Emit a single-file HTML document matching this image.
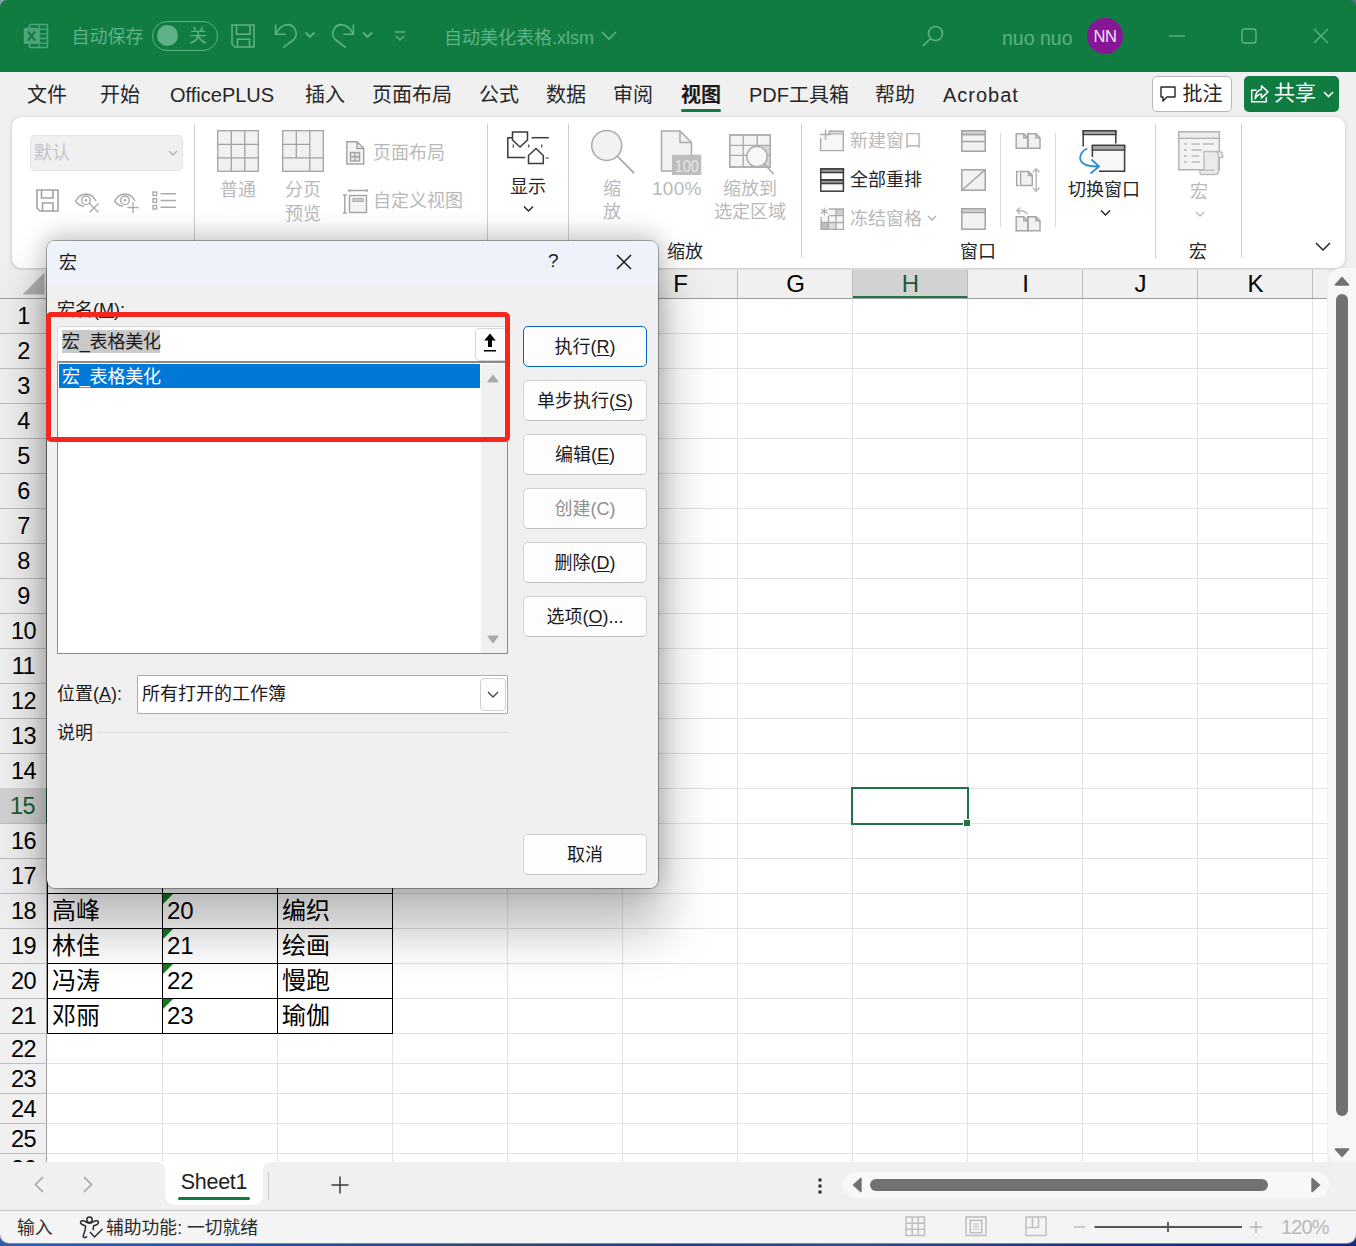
<!DOCTYPE html>
<html lang="zh-CN">
<head>
<meta charset="utf-8">
<title>自动美化表格.xlsm - Excel</title>
<style>
*{box-sizing:border-box;margin:0;padding:0}
html,body{width:1356px;height:1246px;overflow:hidden}
body{position:relative;background:#f0f0f0;font-family:"Liberation Sans","Noto Sans CJK SC",sans-serif;color:#222}
.abs{position:absolute}
svg{position:absolute;overflow:visible}
/* ---------- title bar ---------- */
#titlebar{left:0;top:0;width:1356px;height:72px;background:#107c41;color:#5fb287;border-radius:7px 7px 0 0}
#titlebar .t{position:absolute;white-space:nowrap;font-size:18px;line-height:24px;top:25.500px}
#toggle{left:152px;top:21px;width:66px;height:30px;border:1.5px solid #5fb287;border-radius:15px}
#toggle i{position:absolute;left:4px;top:2.500px;width:21px;height:21px;border-radius:50%;background:#5fb287}
#toggle b{position:absolute;left:36px;top:2px;font-weight:normal;font-size:18px;line-height:24px}
#avatar{left:1087px;top:18px;width:36px;height:36px;border-radius:50%;background:#881798;color:#f3e3f5;font-size:16.500px;line-height:36px;text-align:center;letter-spacing:-.3px}
/* ---------- tabs ---------- */
#tabs{left:0;top:72px;width:1356px;height:45px}
#tabs span{position:absolute;top:9px;font-size:20px;line-height:28px;white-space:nowrap;color:#262626}
#tabs .lat{letter-spacing:0}
#tabs .act{font-weight:bold;color:#1a1a1a}
#tabul{left:681px;top:109px;width:40px;height:3px;background:#107c41;border-radius:2px}
#btnc{left:1152px;top:76px;width:80px;height:36px;background:#fff;border:1px solid #b8b8b8;border-radius:5px}
#btns{left:1244px;top:76px;width:95px;height:36px;background:#107c41;border-radius:5px;color:#fff}
#btnc span,#btns span{position:absolute;font-size:20px;line-height:28px;top:3px}
</style>
</head>
<body>

<!-- ================= TITLE BAR ================= -->
<div class="abs" style="left:0;top:0;width:12px;height:12px;background:#8fa0b0"></div>
<div class="abs" style="left:1344px;top:0;width:12px;height:12px;background:#5d6f86"></div>
<div id="titlebar" class="abs">
  <svg style="left:22px;top:22px" width="30" height="28" viewBox="0 0 30 28">
    <rect x="7.500" y="2.500" width="18" height="23" rx="1.200" fill="none" stroke="#4ea57b" stroke-width="1.600"/>
    <path d="M7.500 7.300H25.500M7.500 11.900H25.500M7.500 16.500H25.500M7.500 21.100H25.500M17.200 2.500V25.500" stroke="#4ea57b" stroke-width="1.300" fill="none"/>
    <rect x="1.800" y="5.800" width="15.400" height="16.200" rx="1.500" fill="#4ea57b"/>
    <path d="M6 9.500L13 18.500M13 9.500L6 18.500" stroke="#107c41" stroke-width="2.200" fill="none"/>
  </svg>
  <span class="t" style="left:71.500px;top:24.500px;font-size:18px">自动保存</span>
  <div id="toggle" class="abs"><i></i><b>关</b></div>
  <svg style="left:231px;top:24px" width="24" height="24" viewBox="0 0 24 24" fill="none" stroke="#5fb287" stroke-width="1.500">
    <path d="M1 1H23V23H4L1 20Z"/><path d="M5.500 1V10.300H19V1"/><path d="M6.500 23V15.200H18.500V23"/>
  </svg>
  <svg style="left:273px;top:22px" width="44" height="28" viewBox="0 0 44 28" fill="none" stroke="#5fb287" stroke-width="1.600">
    <path d="M2.600 2.600V12.300H12.700"/><path d="M2.600 12.300C6 5.500 11 2.600 15 2.600C20 2.600 23.200 7 23.200 12C23.200 15 21.500 17 19.500 18.500L10.300 25.600"/><path d="M32.500 10.500L37 15L41.500 10.500" stroke-width="1.800"/>
  </svg>
  <svg style="left:330px;top:22px" width="44" height="28" viewBox="0 0 44 28" fill="none" stroke="#5fb287" stroke-width="1.600">
    <path d="M23.400 2.600V12.300H13.300"/><path d="M23.400 12.300C20 5.500 15 2.600 11 2.600C6 2.600 2.800 7 2.800 12C2.800 15 4.500 17 6.500 18.500L15.700 25.600"/><path d="M33 10.500L37.500 15L42 10.500" stroke-width="1.800"/>
  </svg>
  <svg style="left:393px;top:30px" width="14" height="12" viewBox="0 0 14 12" fill="none" stroke="#5fb287" stroke-width="1.5">
    <path d="M2 2H12"/><path d="M3 6L7 10L11 6"/>
  </svg>
  <span class="t" style="left:444px">自动美化表格.xlsm</span>
  <svg style="left:601px;top:31px" width="16" height="10" viewBox="0 0 16 10" fill="none" stroke="#5fb287" stroke-width="1.6"><path d="M1 1L8 8L15 1"/></svg>
  <svg style="left:921px;top:24px" width="24" height="24" viewBox="0 0 24 24" fill="none" stroke="#5fb287" stroke-width="1.6">
    <circle cx="14.5" cy="9.5" r="7"/><path d="M9.5 14.5L2 22"/>
  </svg>
  <span class="t" style="left:1002px;font-size:19.500px">nuo nuo</span>
  <div id="avatar" class="abs">NN</div>
  <svg style="left:1168px;top:27px" width="18" height="18" viewBox="0 0 18 18" fill="none" stroke="#5fb287" stroke-width="1.4"><path d="M1 9H17"/></svg>
  <svg style="left:1241px;top:28px" width="16" height="16" viewBox="0 0 16 16" fill="none" stroke="#5fb287" stroke-width="1.4"><rect x="1" y="1" width="14" height="14" rx="2.5"/></svg>
  <svg style="left:1313px;top:28px" width="16" height="16" viewBox="0 0 16 16" fill="none" stroke="#5fb287" stroke-width="1.4"><path d="M1 1L15 15M15 1L1 15"/></svg>
</div>

<!-- ================= RIBBON TABS ================= -->
<div id="tabs" class="abs">
  <span style="left:27px">文件</span>
  <span style="left:100px">开始</span>
  <span class="lat" style="left:170px">OfficePLUS</span>
  <span style="left:305px">插入</span>
  <span style="left:372px">页面布局</span>
  <span style="left:479px">公式</span>
  <span style="left:546px">数据</span>
  <span style="left:613px">审阅</span>
  <span class="act" style="left:681px">视图</span>
  <span style="left:749px">PDF工具箱</span>
  <span style="left:875px">帮助</span>
  <span class="lat" style="left:943px;letter-spacing:1px">Acrobat</span>
</div>
<div id="tabul" class="abs"></div>
<div id="btnc" class="abs">
  <svg style="left:5.500px;top:8px" width="18" height="18" viewBox="0 0 18 18" fill="none" stroke="#262626" stroke-width="1.4"><path d="M2 2H16V12H8L4 16V12H2Z" stroke-linejoin="round"/></svg>
  <span style="left:29.500px;color:#262626">批注</span>
</div>
<div id="btns" class="abs">
  <svg style="left:5.500px;top:8px" width="20" height="20" viewBox="0 0 20 20" fill="none" stroke="#fff" stroke-width="1.500"><path d="M6.500 6.300H1.700V17.800H16.300V13.200"/><path d="M5.200 14.800C5.500 9.500 8 6 11.500 5.600V1.800L18 7.900L11.500 14V10.200C8.500 10.200 6.500 11.800 5.200 14.800Z" stroke-linejoin="round"/></svg>
  <span style="left:30px;font-size:21px">共享</span>
  <svg style="left:79px;top:15px" width="11" height="8" viewBox="0 0 11 8" fill="none" stroke="#fff" stroke-width="1.6"><path d="M1 1L5.500 5.500L10 1"/></svg>
</div>

<!-- ================= RIBBON ================= -->
<style>
#ribbon{left:12px;top:117px;width:1333px;height:151px;background:#fff;border-radius:9px;box-shadow:0 1px 4px rgba(0,0,0,.18),0 0 1px rgba(0,0,0,.12)}
.rsep{position:absolute;top:124px;width:1px;height:134px;background:#cfcfcf}
.rsep2{position:absolute;top:133px;width:1px;height:94px;background:#dcdcdc}
.rl{position:absolute;font-size:18px;line-height:24px;white-space:nowrap;color:#b9b9b9;text-align:center}
.rl.dk{color:#262626}
#cmb{left:30px;top:135px;width:153px;height:36px;background:#f0f0f0;border:1px solid #e3e3e3;border-radius:5px}
</style>
<div id="ribbon" class="abs"></div>
<div id="cmb" class="abs"><span class="rl" style="left:3px;top:5px;color:#c4c4c4">默认</span>
  <svg style="left:137px;top:14px" width="10" height="7" viewBox="0 0 10 7" fill="none" stroke="#b0b0b0" stroke-width="1.4"><path d="M1 1L5 5L9 1"/></svg>
</div>
<!-- sheet-view small icons -->
<svg style="left:36px;top:189px" width="24" height="24" viewBox="0 0 24 24" fill="none" stroke="#a3a3a3" stroke-width="1.600">
  <path d="M1 1H22V22H4L1 19Z"/><path d="M5.500 1V9H17V1"/><path d="M6.500 22V14H17V22"/>
</svg>
<svg style="left:74px;top:191px" width="28" height="24" viewBox="0 0 28 24" fill="none" stroke="#ababab" stroke-width="1.4">
  <path d="M1.500 10C5 4 9 3 12 3C15.500 3 19.500 5 22 10"/><path d="M1.500 10C4 13.500 7 15 10 15.300"/><circle cx="12" cy="9.300" r="4.300"/><circle cx="12" cy="9.300" r="1.300" fill="#ababab" stroke="none"/><path d="M15.500 12.500L24.500 21.500M24.500 12.500L15.500 21.500"/>
</svg>
<svg style="left:113px;top:191px" width="28" height="24" viewBox="0 0 28 24" fill="none" stroke="#ababab" stroke-width="1.4">
  <path d="M1.500 10C5 4 9 3 12 3C15.500 3 19.500 5 22 10"/><path d="M1.500 10C4 13.500 7 15 10 15.300"/><circle cx="12" cy="9.300" r="4.300"/><circle cx="12" cy="9.300" r="1.300" fill="#ababab" stroke="none"/><path d="M20 11V22M14.500 16.500H25.500"/>
</svg>
<svg style="left:152px;top:191px" width="25" height="20" viewBox="0 0 25 20" fill="none" stroke="#ababab" stroke-width="1.4">
  <rect x="1" y="1" width="3.600" height="3.600"/><rect x="1" y="7.700" width="3.600" height="3.600"/><rect x="1" y="14.400" width="3.600" height="3.600"/><path d="M8.500 2.800H24M8.500 9.500H24M8.500 16.200H24"/>
</svg>
<div class="rsep" style="left:194px"></div>
<!-- normal / page break -->
<svg style="left:217px;top:130px" width="42" height="42" viewBox="0 0 42 42" fill="#f1f1f1" stroke="#a3a3a3" stroke-width="1.3">
  <rect x=".7" y=".7" width="40.600" height="40.600"/><path d="M14.300 .7V41.300M27.800 .7V41.300M.7 14.300H41.300M.7 27.800H41.300" fill="none"/>
</svg>
<span class="rl" style="left:220px;top:178px">普通</span>
<svg style="left:282px;top:130px" width="42" height="42" viewBox="0 0 42 42" fill="#f1f1f1" stroke="#a3a3a3" stroke-width="1.3">
  <rect x=".7" y=".7" width="40.600" height="40.600"/><path d="M27.800 .7V41.300M.7 27.800H41.300M14.300 .7V27.800M.7 14.300H27.800" fill="none"/>
</svg>
<span class="rl" style="left:285px;top:178px">分页<br>预览</span>
<svg style="left:346px;top:141px" width="19" height="24" viewBox="0 0 19 24" fill="none" stroke="#a3a3a3" stroke-width="1.4">
  <path d="M.8 .8H11L17.700 7.500V23H.8Z" fill="#f4f4f4"/><path d="M11 .8V7.500H17.700"/><rect x="4.500" y="11.500" width="9" height="8.500" fill="#e6e6e6"/><path d="M9 11.500V20M4.500 15.700H13.500"/>
</svg>
<span class="rl" style="left:373px;top:141px">页面布局</span>
<svg style="left:343px;top:189px" width="25" height="25" viewBox="0 0 25 25" fill="none" stroke="#a3a3a3" stroke-width="1.4">
  <path d="M6 1.500H24M6 0V3M24 0V3M1.800 6V24M0 6H3.600M0 24H3.600"/><rect x="6.500" y="6.500" width="17" height="17" fill="#f4f4f4"/><rect x="10" y="9.700" width="10" height="2.600" fill="#dcdcdc" stroke-width="1.100"/>
</svg>
<span class="rl" style="left:373px;top:189px">自定义视图</span>
<div class="rsep" style="left:487px"></div>
<!-- show -->
<svg style="left:507px;top:131px" width="42" height="34" viewBox="0 0 42 34" fill="none" stroke="#3b3b3b" stroke-width="1.500">
  <path d="M5.500 1H20.500V9L13 16L5.500 9Z"/><path d="M24.500 6.700H41.800"/><path d="M5 6.700H.8V26.600H18.300"/><path d="M21.500 32.500V24.500L29 17.500L36.300 24.500V32.500Z"/><path d="M6.300 13.500V16.500M21.800 13.500V16.500M34.800 13.500V16.500M38.500 27H41.800" stroke-width="1.200"/>
</svg>
<span class="rl dk" style="left:510px;top:175px">显示</span>
<svg style="left:523px;top:205px" width="11" height="8" viewBox="0 0 11 8" fill="none" stroke="#262626" stroke-width="1.500"><path d="M1 1.500L5.500 6L10 1.500"/></svg>
<div class="rsep" style="left:568px"></div>
<!-- zoom group -->
<svg style="left:591px;top:130px" width="44" height="44" viewBox="0 0 44 44" fill="none" stroke="#ababab" stroke-width="1.500">
  <circle cx="15.700" cy="15.400" r="15" fill="#f2f2f2"/><path d="M26.500 26.300L43 43" stroke-width="1.800"/>
</svg>
<span class="rl" style="left:603px;top:178px;line-height:23px">缩<br>放</span>
<svg style="left:660px;top:130px" width="42" height="46" viewBox="0 0 42 46" fill="none" stroke="#ababab" stroke-width="1.500">
  <path d="M1.500 1H20L31.500 12.500V41H1.500Z" fill="#f2f2f2"/><path d="M20 1V12.500H31.500"/><rect x="12" y="24.700" width="29.300" height="20.300" fill="#bdbdbd" stroke="none"/>
  <text x="26.700" y="41.500" font-family="Liberation Sans,sans-serif" font-size="17" fill="#e6e6e6" stroke="none" text-anchor="middle" textLength="24" lengthAdjust="spacingAndGlyphs">100</text>
</svg>
<span class="rl" style="left:652px;top:177px;font-size:19px;line-height:23px;letter-spacing:.3px">100%</span>
<svg style="left:729px;top:134px" width="46" height="42" viewBox="0 0 46 42" fill="none" stroke="#ababab" stroke-width="1.400">
  <rect x=".7" y="1" width="40.600" height="32" fill="#f4f4f4"/><rect x="28" y="11.400" width="13.300" height="21.600" fill="#d6d6d6" stroke="none"/><path d="M.7 11.400H41.300M.7 21.400H41.300M14.200 1V33M28.200 1V33"/><rect x=".7" y="1" width="40.600" height="32"/><circle cx="28" cy="22.500" r="10.200" fill="#f7f7f7"/><path d="M35.300 29.800L44.500 40" stroke-width="1.700"/>
</svg>
<span class="rl" style="left:714px;top:178px;line-height:23px;width:72px">缩放到<br>选定区域</span>
<span class="rl dk" style="left:667px;top:240px">缩放</span>
<div class="rsep" style="left:801px"></div>
<!-- window group col 1 -->
<svg style="left:819px;top:129px" width="25" height="23" viewBox="0 0 25 23" fill="none" stroke="#ababab" stroke-width="1.400">
  <path d="M10 2.300H24.300V21.600H1.600V9" fill="#f7f7f7"/><path d="M10 2.300H24.300V5H10Z" fill="#d9d9d9" stroke-width="1.100"/><path d="M6.500 .5V11M1 5.500H12" stroke-width="1.400"/>
</svg>
<span class="rl" style="left:850px;top:129px">新建窗口</span>
<svg style="left:820px;top:168px" width="24" height="24" viewBox="0 0 24 24" fill="none" stroke="#3b3b3b" stroke-width="1.500">
  <rect x=".8" y="1" width="22.600" height="22.200" fill="#fafafa"/><path d="M.8 1H23.400V4.500H.8ZM.8 12H23.400V15.500H.8Z" fill="#9c9c9c" stroke-width="1.300"/><path d="M.8 12H23.400"/>
</svg>
<span class="rl dk" style="left:850px;top:168px">全部重排</span>
<svg style="left:820px;top:207px" width="24" height="23" viewBox="0 0 24 23" fill="none" stroke="#ababab" stroke-width="1.300">
  <rect x="1" y="2" width="22.400" height="20.300" fill="#f6f6f6" stroke="none"/><rect x="16" y="2" width="7.400" height="6.700" fill="#cfcfcf" stroke="none"/><rect x="1" y="15.500" width="7.500" height="6.800" fill="#bdbdbd" stroke="none"/><rect x="8.500" y="15.500" width="7.500" height="6.800" fill="#dedede" stroke="none"/>
  <path d="M9 2H23.400V22.300H1V10M8.500 9V22.300M16 2V22.300M9 8.700H23.400M1 15.500H23.400"/><rect x="0" y="0" width="8.500" height="9" fill="#fff" stroke="none"/><path d="M4.300 .5V8.500M.8 2.500L7.800 6.500M7.800 2.500L.8 6.500" stroke-width="1.100"/>
</svg>
<span class="rl" style="left:850px;top:207px">冻结窗格</span>
<svg style="left:927px;top:215px" width="10" height="7" viewBox="0 0 10 7" fill="none" stroke="#b0b0b0" stroke-width="1.400"><path d="M1 1L5 5L9 1"/></svg>
<!-- window group col 2 -->
<svg style="left:961px;top:130px" width="25" height="22" viewBox="0 0 25 22" fill="#f2f2f2" stroke="#a3a3a3" stroke-width="1.500">
  <rect x=".8" y=".8" width="23.400" height="20.400"/><path d="M.8 4.500H24.200M.8 11.500H24.200" fill="none"/><rect x=".8" y=".8" width="23.400" height="3.700" fill="#d4d4d4"/>
</svg>
<svg style="left:961px;top:169px" width="25" height="22" viewBox="0 0 25 22" fill="#f2f2f2" stroke="#a3a3a3" stroke-width="1.500">
  <rect x=".8" y=".8" width="23.400" height="20.400"/><path d="M.8 21.200L24.200 .8" fill="none"/>
</svg>
<svg style="left:961px;top:208px" width="25" height="22" viewBox="0 0 25 22" fill="#f2f2f2" stroke="#a3a3a3" stroke-width="1.500">
  <rect x=".8" y=".8" width="23.400" height="20.400"/><rect x=".8" y=".8" width="23.400" height="3.700" fill="#d4d4d4"/>
</svg>
<div class="rsep2" style="left:1000px"></div>
<!-- window group col 3 -->
<svg style="left:1015px;top:133px" width="26" height="16" viewBox="0 0 26 16" fill="#f1f1f1" stroke="#a6a6a6" stroke-width="1.500">
  <path d="M1.200 .800H8.800L12.800 4.800V15.200H1.200Z"/><path d="M12.800 .800H21L25 4.800V15.200H12.800Z"/><path d="M8.800 .800V4.800H12.800M21 .800V4.800H25" fill="none"/><path d="M12.800 .800V15.200" fill="none"/>
</svg>
<svg style="left:1015px;top:167px" width="26" height="26" viewBox="0 0 26 26" fill="none" stroke="#a6a6a6" stroke-width="1.500">
  <path d="M4 4.600H1.700V18.600H4"/><path d="M5.600 4.600H13.500L17.300 8.400V18.600H5.600Z" fill="#f1f1f1"/><path d="M13.500 4.600V8.400H17.300"/><path d="M21.200 1.800V24.200M17.700 5.300L21.200 1.800L24.700 5.300M17.700 20.700L21.200 24.200L24.700 20.700" stroke="#b9b9b9"/>
</svg>
<svg style="left:1015px;top:205px" width="26" height="27" viewBox="0 0 26 27" fill="#f1f1f1" stroke="#a6a6a6" stroke-width="1.500">
  <path d="M1.200 11.800H8.800L12.800 15.800V25.700H1.200Z"/><path d="M12.800 11.800H21L25 15.800V25.700H12.800Z"/><path d="M8.800 11.800V15.800H12.800M21 11.800V15.800H25M12.800 11.800V25.700" fill="none"/><path d="M12.400 9.300C11.500 6.500 7 5.500 2.200 5.500M5.200 2.500L1.800 5.500L5.200 8.800" fill="none" stroke="#b9b9b9"/>
</svg>
<div class="rsep2" style="left:1055px"></div>
<!-- switch window -->
<svg style="left:1079px;top:130px" width="47" height="45" viewBox="0 0 47 45" fill="none" stroke="#3b3b3b" stroke-width="1.500">
  <path d="M4.200 16.500V.8H36.800V13.600"/><path d="M4.200 .8H36.800V4.700H4.200Z" fill="#a6a6a6" stroke-width="1.300"/>
  <path d="M13.400 27V15.400H45.600V41.300H20" fill="#f7f7f7"/><path d="M13.400 15.400H45.600V20.200H13.400Z" fill="#a6a6a6" stroke-width="1.300"/>
  <path d="M8.300 18.500C2 21 -1 28 3 32.500C6.500 36 12 36.500 19 36.500M12.500 29.500L20 36.500L11.500 43.500" stroke="#2e8fd0" stroke-width="1.800"/>
</svg>
<span class="rl dk" style="left:1068px;top:178px">切换窗口</span>
<svg style="left:1100px;top:209px" width="11" height="8" viewBox="0 0 11 8" fill="none" stroke="#262626" stroke-width="1.500"><path d="M1 1.500L5.500 6L10 1.500"/></svg>
<span class="rl dk" style="left:960px;top:240px">窗口</span>
<div class="rsep" style="left:1155px"></div>
<!-- macro -->
<svg style="left:1178px;top:131px" width="46" height="44" viewBox="0 0 46 44" fill="none" stroke="#b0b0b0" stroke-width="1.400">
  <path d="M.8 .8H41.300V38.700H.8Z" fill="#f3f3f3"/><path d="M.8 .8H41.300V7.400H.8Z" fill="#ededed" stroke-width="1.300"/>
  <path d="M6 13H9M13.500 13H22M25 13H36M6 19H9M13.500 19H24M6 25H9M13.500 25H21M6 31H9M13.500 31H22" stroke-width="1.500" stroke="#bcbcbc"/>
  <path d="M26 20.500H41.500Q44.700 20.800 44.700 24.500V26.500H40.500V40Q40.500 43.500 37 43.500H22.500Q21.500 41.500 22 39.300H26Z" fill="#ebebeb" stroke="#bdbdbd"/><path d="M40.500 26.500V24.500Q40.300 21 37.500 20.500" stroke="#bdbdbd"/><path d="M26 39.300H36.500" stroke="#bdbdbd"/>
</svg>
<span class="rl" style="left:1190px;top:180px">宏</span>
<svg style="left:1195px;top:211px" width="10" height="7" viewBox="0 0 10 7" fill="none" stroke="#b9b9b9" stroke-width="1.400"><path d="M1 1L5 5L9 1"/></svg>
<span class="rl dk" style="left:1189px;top:240px">宏</span>
<div class="rsep" style="left:1241px"></div>
<svg style="left:1315px;top:242px" width="16" height="10" viewBox="0 0 16 10" fill="none" stroke="#262626" stroke-width="1.500"><path d="M1 1L8 8L15 1"/></svg>

<!-- ================= GRID ================= -->
<style>
#grid{left:0;top:270px;width:1327px;height:892px;background:#fff;overflow:hidden}
#colhdr{left:0;top:0;width:1327px;height:28px;background:#f0f0f0}
#rowhdr{left:0;top:28px;width:47px;height:864px;background:#f0f0f0}
.ch{position:absolute;top:0;height:28px;width:115px;padding-left:1px;text-align:center;font-size:24px;line-height:28px;color:#000;border-right:1px solid #bdbdbd}
.rh{position:absolute;left:0;width:47px;text-align:center;font-size:23.500px;color:#000;border-bottom:1px solid #bdbdbd;letter-spacing:-.5px}
.hl{position:absolute;left:47px;width:1280px;height:1px;background:#e2e2e2}
.vl{position:absolute;top:28px;width:1px;height:864px;background:#e2e2e2}
.cell{position:absolute;height:36px;width:116px;border:1px solid #000;font-size:24px;line-height:34px;padding-left:4px;color:#000;white-space:nowrap;background:#fff}
.cell i{position:absolute;left:0;top:0;width:0;height:0;border-top:10px solid #127c1c;border-right:10px solid transparent}
</style>
<div id="grid" class="abs">
<div id="colhdr" class="abs"></div>
<div id="rowhdr" class="abs"></div>
<div class="hl" style="top:63px"></div>
<div class="hl" style="top:98px"></div>
<div class="hl" style="top:133px"></div>
<div class="hl" style="top:168px"></div>
<div class="hl" style="top:203px"></div>
<div class="hl" style="top:238px"></div>
<div class="hl" style="top:273px"></div>
<div class="hl" style="top:308px"></div>
<div class="hl" style="top:343px"></div>
<div class="hl" style="top:378px"></div>
<div class="hl" style="top:413px"></div>
<div class="hl" style="top:448px"></div>
<div class="hl" style="top:483px"></div>
<div class="hl" style="top:518px"></div>
<div class="hl" style="top:553px"></div>
<div class="hl" style="top:588px"></div>
<div class="hl" style="top:623px"></div>
<div class="hl" style="top:658px"></div>
<div class="hl" style="top:693px"></div>
<div class="hl" style="top:728px"></div>
<div class="hl" style="top:763px"></div>
<div class="hl" style="top:793px"></div>
<div class="hl" style="top:823px"></div>
<div class="hl" style="top:853px"></div>
<div class="hl" style="top:883px"></div>
<div class="vl" style="left:162px"></div>
<div class="vl" style="left:277px"></div>
<div class="vl" style="left:392px"></div>
<div class="vl" style="left:507px"></div>
<div class="vl" style="left:622px"></div>
<div class="vl" style="left:737px"></div>
<div class="vl" style="left:852px"></div>
<div class="vl" style="left:967px"></div>
<div class="vl" style="left:1082px"></div>
<div class="vl" style="left:1197px"></div>
<div class="vl" style="left:1312px"></div>
<div class="ch" style="left:48px">A</div>
<div class="ch" style="left:163px">B</div>
<div class="ch" style="left:278px">C</div>
<div class="ch" style="left:393px">D</div>
<div class="ch" style="left:508px">E</div>
<div class="ch" style="left:623px">F</div>
<div class="ch" style="left:738px">G</div>
<div class="ch" style="left:853px;background:#d2d2d2;color:#185c37;border-bottom:2px solid #217346">H</div>
<div class="ch" style="left:968px">I</div>
<div class="ch" style="left:1083px">J</div>
<div class="ch" style="left:1198px">K</div>
<div class="ch" style="left:1313px;width:15px;border-right:0"></div>
<div class="abs" style="left:0;top:0;width:47px;height:28px;border-right:1px solid #bdbdbd"><svg style="left:22px;top:2px" width="23" height="23" viewBox="0 0 23 23"><path d="M22.500 .5V22.500H.5Z" fill="#b3b3b3"/></svg></div>
<div class="abs" style="left:0;top:28px;width:1327px;height:1px;background:#9f9f9f"></div>
<div class="abs" style="left:46px;top:28px;width:1px;height:864px;background:#9f9f9f"></div>
<div class="rh" style="top:28px;height:36px;line-height:36px">1</div>
<div class="rh" style="top:63px;height:36px;line-height:36px">2</div>
<div class="rh" style="top:98px;height:36px;line-height:36px">3</div>
<div class="rh" style="top:133px;height:36px;line-height:36px">4</div>
<div class="rh" style="top:168px;height:36px;line-height:36px">5</div>
<div class="rh" style="top:203px;height:36px;line-height:36px">6</div>
<div class="rh" style="top:238px;height:36px;line-height:36px">7</div>
<div class="rh" style="top:273px;height:36px;line-height:36px">8</div>
<div class="rh" style="top:308px;height:36px;line-height:36px">9</div>
<div class="rh" style="top:343px;height:36px;line-height:36px">10</div>
<div class="rh" style="top:378px;height:36px;line-height:36px">11</div>
<div class="rh" style="top:413px;height:36px;line-height:36px">12</div>
<div class="rh" style="top:448px;height:36px;line-height:36px">13</div>
<div class="rh" style="top:483px;height:36px;line-height:36px">14</div>
<div class="rh" style="top:518px;height:36px;line-height:36px;width:48px;padding-right:1px;background:#d2d2d2;color:#185c37;border-right:2px solid #217346">15</div>
<div class="rh" style="top:553px;height:36px;line-height:36px">16</div>
<div class="rh" style="top:588px;height:36px;line-height:36px">17</div>
<div class="rh" style="top:623px;height:36px;line-height:36px">18</div>
<div class="rh" style="top:658px;height:36px;line-height:36px">19</div>
<div class="rh" style="top:693px;height:36px;line-height:36px">20</div>
<div class="rh" style="top:728px;height:36px;line-height:36px">21</div>
<div class="rh" style="top:763px;height:31px;line-height:32px">22</div>
<div class="rh" style="top:793px;height:31px;line-height:32px">23</div>
<div class="rh" style="top:823px;height:31px;line-height:32px">24</div>
<div class="rh" style="top:853px;height:31px;line-height:32px">25</div>
<div class="rh" style="top:883px;height:31px;line-height:32px">26</div>
<div class="cell" style="left:47px;top:588px"></div>
<div class="cell" style="left:162px;top:588px"></div>
<div class="cell" style="left:277px;top:588px"></div>
<div class="cell" style="left:47px;top:623px">高峰</div>
<div class="cell" style="left:162px;top:623px"><i></i>20</div>
<div class="cell" style="left:277px;top:623px">编织</div>
<div class="cell" style="left:47px;top:658px">林佳</div>
<div class="cell" style="left:162px;top:658px"><i></i>21</div>
<div class="cell" style="left:277px;top:658px">绘画</div>
<div class="cell" style="left:47px;top:693px">冯涛</div>
<div class="cell" style="left:162px;top:693px"><i></i>22</div>
<div class="cell" style="left:277px;top:693px">慢跑</div>
<div class="cell" style="left:47px;top:728px">邓丽</div>
<div class="cell" style="left:162px;top:728px"><i></i>23</div>
<div class="cell" style="left:277px;top:728px">瑜伽</div>
<div class="abs" style="left:851px;top:517px;width:118px;height:38px;border:2px solid #217346"></div>
<div class="abs" style="left:963px;top:549px;width:8px;height:8px;background:#217346;border:1px solid #fff"></div>
</div>
<div class="abs" style="left:1328px;top:268px;width:28px;height:896px;background:#f7f7f7;border-radius:14px 0 0 14px"></div>
<svg style="left:1334px;top:276px" width="16" height="10" viewBox="0 0 16 10"><path d="M8 .5L15.300 8.500Q15.500 9.700 14.300 9.700H1.700Q.5 9.700 .7 8.500Z" fill="#717171"/></svg>
<div class="abs" style="left:1336px;top:294px;width:12px;height:822px;background:#717171;border-radius:6px"></div>
<svg style="left:1334px;top:1148px" width="16" height="10" viewBox="0 0 16 10"><path d="M8 9.500L15.300 1.500Q15.500 .3 14.300 .3H1.700Q.5 .3 .7 1.500Z" fill="#717171"/></svg>

<!-- ================= SHEET TABS / STATUS ================= -->
<style>
#sheetbar{left:0;top:1162px;width:1356px;height:48px;background:#f0f0f0}
#sheettab{left:165px;top:1162px;width:98px;height:43px;background:#fff;border-radius:0 0 9px 9px}
#sheettab span{position:absolute;left:0;width:98px;top:6px;text-align:center;font-size:21.500px;line-height:28px;color:#1f1f1f;letter-spacing:-.3px}
#sheettab i{position:absolute;left:13px;top:35px;width:72px;height:3px;background:#107c41;border-radius:1.500px}
#status{left:0;top:1210px;width:1356px;height:33px;background:#f4f4f4;border-top:1px solid #c8c6c4;border-radius:0 0 9px 9px;box-shadow:0 .5px 0 .5px #8a8a8a}
#status span{position:absolute;top:5px;font-size:17.800px;line-height:24px;color:#2b2b2b;white-space:nowrap}
#desk{left:0;top:1232px;width:1356px;height:14px;background:linear-gradient(90deg,#2b5fae 0,#21509a 22%,#2a4d78 35%,#1c4079 50%,#2b5286 62%,#15357a 80%,#0d2c8a 100%)}
</style>
<div id="desk" class="abs"></div>
<div class="abs" style="left:150px;top:1162px;width:130px;height:14px;background:#fff"></div>
<div class="abs" style="left:0;top:1162px;width:165px;height:48px;background:#f0f0f0;border-radius:0 8px 0 0"></div>
<div class="abs" style="left:263px;top:1162px;width:1093px;height:48px;background:#f0f0f0;border-radius:8px 0 0 0"></div>
<div class="abs" style="left:843px;top:1172px;width:486px;height:26px;background:#f8f8f8;border-radius:13px"></div>
<svg style="left:852px;top:1177px" width="10" height="16" viewBox="0 0 10 16"><path d="M.5 8L8.500 .7Q9.700 .5 9.700 1.700V14.300Q9.700 15.500 8.500 15.300Z" fill="#717171"/></svg>
<div class="abs" style="left:870px;top:1179px;width:398px;height:12px;background:#717171;border-radius:6px"></div>
<svg style="left:1311px;top:1177px" width="10" height="16" viewBox="0 0 10 16"><path d="M9.500 8L1.500 .7Q.3 .5 .3 1.700V14.300Q.3 15.500 1.500 15.300Z" fill="#717171"/></svg>
<svg style="left:818px;top:1178px" width="4" height="16" viewBox="0 0 4 16" fill="#262626"><rect x=".5" y=".5" width="3" height="3"/><rect x=".5" y="6.500" width="3" height="3"/><rect x=".5" y="12.500" width="3" height="3"/></svg>
<div id="sheettab" class="abs"><span>Sheet1</span><i></i></div>
<div class="abs" style="left:268px;top:1172px;width:1px;height:28px;background:#c9c9c9"></div>
<svg style="left:34px;top:1176px" width="10" height="17" viewBox="0 0 10 17" fill="none" stroke="#a6a6a6" stroke-width="1.600"><path d="M9 1L1.500 8.500L9 16"/></svg>
<svg style="left:83px;top:1176px" width="10" height="17" viewBox="0 0 10 17" fill="none" stroke="#a6a6a6" stroke-width="1.600"><path d="M1 1L8.500 8.500L1 16"/></svg>
<svg style="left:331px;top:1176px" width="18" height="18" viewBox="0 0 18 18" fill="none" stroke="#3b3b3b" stroke-width="1.500"><path d="M9 .5V17.500M.5 9H17.500"/></svg>
<div id="status" class="abs">
  <span style="left:17px">输入</span>
  <svg style="left:79px;top:5px" width="25" height="23" viewBox="0 0 25 23" fill="none" stroke="#2b2b2b" stroke-width="1.500" stroke-linecap="round" stroke-linejoin="round">
    <circle cx="10.500" cy="3.700" r="2.700"/><path d="M6.500 5.600C4 4 1.500 4.500 1.500 6.500C1.500 8.500 4.500 9 6.500 10C7 14 5 17 4.200 20C4 21.500 6 22 7.500 20.800"/><path d="M6.500 5.600C9 7.500 12 7.500 14.500 5.600C17 4 19.500 4.500 19.500 6.500C19.500 8.500 17 9 14.800 9.700C14.300 10.500 14.300 12 14.200 13.500"/><path d="M11 16L15.500 21L23.500 13" stroke-linecap="butt" stroke-linejoin="miter"/>
  </svg>
  <span style="left:106px">辅助功能: 一切就绪</span>
  <svg style="left:905px;top:5px" width="21" height="21" viewBox="0 0 21 21" fill="none" stroke="#bfbfbf" stroke-width="1.500"><rect x="1" y="1" width="18.500" height="18.500"/><path d="M7.200 1V19.500M13.300 1V19.500M1 7.200H19.500M1 13.300H19.500"/></svg>
  <svg style="left:965px;top:5px" width="22" height="21" viewBox="0 0 22 21" fill="none" stroke="#bfbfbf" stroke-width="1.500"><rect x="1" y="1" width="20" height="18.500"/><rect x="5.300" y="4.300" width="11.400" height="12.500"/><path d="M8 8H14M8 10.500H14M8 13H14" stroke-width="1.200"/></svg>
  <svg style="left:1025px;top:5px" width="22" height="21" viewBox="0 0 22 21" fill="none" stroke="#bfbfbf" stroke-width="1.500"><rect x="1" y="1" width="20" height="18.500"/><path d="M1 11.500H13.500V1M7.400 1V11.500"/></svg>
  <svg style="left:1073px;top:9px" width="190" height="14" viewBox="0 0 190 14" fill="none" stroke="#b3b3b3" stroke-width="1.300"><path d="M1 7H12"/><path d="M21.500 7H169" stroke="#555" stroke-width="1.800"/><path d="M95 2V12" stroke="#555" stroke-width="1.800"/><path d="M177 7H189M183 1V13"/></svg>
  <span style="left:1281px;top:1px;font-size:20px;line-height:30px;color:#b9b9b9;letter-spacing:-.9px">120%</span>
</div>

<!-- ================= MACRO DIALOG ================= -->
<style>
#dlg{left:46px;top:240px;width:613px;height:649px;background:#f0f0f0;background-clip:padding-box;border:1px solid rgba(0,0,0,.30);border-radius:9px;box-shadow:0 36px 52px 6px rgba(0,0,0,.26),0 0 20px 2px rgba(0,0,0,.08),0 -8px 24px 0 rgba(0,0,0,.12);overflow:hidden;font-size:18px;color:#1a1a1a}
#dlg .cap{position:absolute;left:0;top:0;width:611px;height:43px;background:#eef3fb}
#dlg .tx{position:absolute;white-space:nowrap;line-height:24px}
.dbtn{position:absolute;left:476px;width:124px;height:41px;background:#fdfdfd;border:1px solid #d2d2d2;border-bottom-color:#c2c2c2;border-radius:5px;text-align:center;line-height:41px;font-size:18px;white-space:nowrap}
.dbtn u{text-decoration-thickness:1px;text-underline-offset:2px}
#redbox{left:46px;top:312px;width:464px;height:130px;border:5px solid #f5261d;border-radius:5px}
</style>
<div id="dlg" class="abs">
  <div class="cap"></div>
  <span class="tx" style="left:12px;top:10px">宏</span>
  <span class="tx" style="left:501px;top:8px;font-size:19px">?</span>
  <svg style="left:569px;top:13px" width="16" height="16" viewBox="0 0 16 16" fill="none" stroke="#1a1a1a" stroke-width="1.500"><path d="M1 1L15 15M15 1L1 15"/></svg>
  <span class="tx" style="left:10px;top:57px">宏名(<u>M</u>):</span>
  <!-- name input -->
  <div class="abs" style="left:10px;top:85px;width:451px;height:37px;background:#fff;border:1px solid #d9d9d9;border-bottom:2px solid #8a8a8a;border-radius:4px 4px 0 0"></div>
  <div class="abs" style="left:15px;top:89px;width:98px;height:23px;background:#c9c9c9"></div>
  <span class="tx" style="left:15px;top:89px;letter-spacing:-.2px">宏_表格美化</span>
  <div class="abs" style="left:428px;top:87px;width:33px;height:33px;background:#fdfdfd;border:1px solid #d6d6d6;border-radius:4px"></div>
  <svg style="left:436px;top:92px" width="14" height="22" viewBox="0 0 14 22" fill="#000"><path d="M7 .5L1.200 7.500H5V14H9V7.500H12.800Z"/><rect x="1" y="17" width="12" height="1.500"/></svg>
  <!-- list box -->
  <div class="abs" style="left:10px;top:122px;width:451px;height:291px;background:#fff;border:1px solid #8a8a8a;border-top:0"></div>
  <div class="abs" style="left:434px;top:123px;width:26px;height:289px;background:#f0f0f0"></div>
  <div class="abs" style="left:12px;top:123px;width:421px;height:24px;background:#0078d7"></div>
  <span class="tx" style="left:15px;top:124px;color:#fff;letter-spacing:-.2px">宏_表格美化</span>
  <svg style="left:440px;top:133px" width="12" height="9" viewBox="0 0 12 9"><path d="M6 .5L11.300 7.300Q11.500 8.500 10.300 8.500H1.700Q.5 8.500 .7 7.300Z" fill="#a9a9a9"/></svg>
  <svg style="left:440px;top:394px" width="12" height="9" viewBox="0 0 12 9"><path d="M6 8.500L11.300 1.700Q11.500 .5 10.300 .5H1.700Q.5 .5 .7 1.700Z" fill="#a9a9a9"/></svg>
  <!-- buttons -->
  <div class="dbtn" style="top:85px;border:1.500px solid #0067c0">执行(<u>R</u>)</div>
  <div class="dbtn" style="top:139px">单步执行(<u>S</u>)</div>
  <div class="dbtn" style="top:193px">编辑(<u>E</u>)</div>
  <div class="dbtn" style="top:247px;color:#8f8f8f">创建(C)</div>
  <div class="dbtn" style="top:301px">删除(<u>D</u>)</div>
  <div class="dbtn" style="top:355px">选项(<u>O</u>)...</div>
  <div class="dbtn" style="top:593px">取消</div>
  <!-- location -->
  <span class="tx" style="left:10px;top:441px">位置(<u>A</u>):</span>
  <div class="abs" style="left:90px;top:434px;width:371px;height:39px;background:#fff;border:1px solid #ababab;border-radius:1px"></div>
  <span class="tx" style="left:95px;top:441px">所有打开的工作簿</span>
  <div class="abs" style="left:433px;top:437px;width:26px;height:33px;background:#fdfdfd;border:1px solid #d0d0d0;border-radius:4px"></div>
  <svg style="left:440px;top:450px" width="12" height="8" viewBox="0 0 12 8" fill="none" stroke="#444" stroke-width="1.300"><path d="M1 1L6 6L11 1"/></svg>
  <span class="tx" style="left:10px;top:480px">说明</span>
  <div class="abs" style="left:51px;top:491px;width:410px;height:1px;background:#dcdcdc"></div>
</div>
<div id="redbox" class="abs"></div>


</body>
</html>
